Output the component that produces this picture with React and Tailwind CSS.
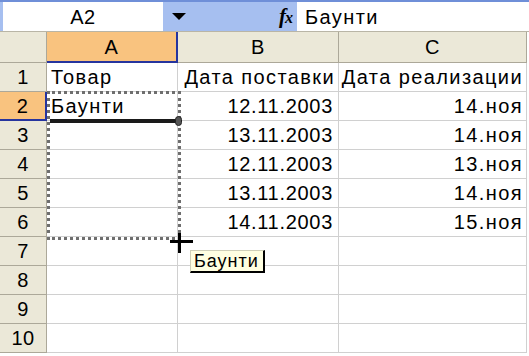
import React from "react";

const rows = [
  ["Товар", "Дата поставки", "Дата реализации"],
  ["Баунти", "12.11.2003", "14.ноя"],
  ["", "13.11.2003", "14.ноя"],
  ["", "12.11.2003", "13.ноя"],
  ["", "13.11.2003", "14.ноя"],
  ["", "14.11.2003", "15.ноя"],
  ["", "", ""],
  ["", "", ""],
  ["", "", ""],
  ["", "", ""],
];

function App() {
  return (
    <div className="relative w-[529px] h-[356px] overflow-hidden bg-white font-['Liberation_Sans',Arial,sans-serif] text-[20px] tracking-[0.5px] text-black">
      {/* formula bar */}
      <div className="flex h-[32px] border-t-[2px] border-[#6f8fd8] bg-[#a6bff0] border-b border-b-[#b9b5a6]">
        <div className="ml-[3px] w-[160px] bg-white flex items-center justify-center">A2</div>
        <div className="w-[134px] flex items-center pl-[9px]">
          <svg width="14" height="7" viewBox="0 0 14 7">
            <path d="M0 0h14L7 7z" fill="#000" />
          </svg>
          <span className="ml-auto mr-[5px] font-['Liberation_Serif',serif] italic font-bold text-[21px] tracking-[-1px]">
            f<span className="text-[16px]">x</span>
          </span>
        </div>
        <div className="flex-1 bg-white flex items-center pl-[8px] tracking-[1.4px]">Баунти</div>
      </div>

      {/* grid */}
      <div className="grid grid-cols-[47px_131px_161px_188px] grid-rows-[31px_repeat(10,29px)]">
        <div className="bg-[#ebe8d8] border-r border-b border-[#aca899]" />
        <div className="bg-[#f9c37f] border-r-[2px] border-b-[2px] border-[#26349e] flex items-center justify-center">A</div>
        <div className="bg-[#ebe8d8] border-r border-b border-[#aca899] flex items-center justify-center">B</div>
        <div className="bg-[#ebe8d8] border-r border-b border-[#aca899] flex items-center justify-center">C</div>
        {rows.map((r, i) => (
          <React.Fragment key={i}>
            <div
              className={
                i === 1
                  ? "bg-[#f9c37f] border-r-[2px] border-b-[2px] border-[#26349e] flex items-center justify-center"
                  : "bg-[#ebe8d8] border-r border-b border-[#aca899] flex items-center justify-center"
              }
            >
              {i + 1}
            </div>
            <div className="border-r border-b border-[#d0d0d0] flex items-center pl-[4px] whitespace-nowrap tracking-[1.4px]">{r[0]}</div>
            <div
              className={
                i === 0
                  ? "border-r border-b border-[#d0d0d0] flex items-center justify-end pr-[3px] whitespace-nowrap tracking-[1.4px]"
                  : "border-r border-b border-[#d0d0d0] flex items-center justify-end pr-[5px] whitespace-nowrap tracking-[0.7px]"
              }
            >
              {r[1]}
            </div>
            <div className="border-r border-b border-[#d0d0d0] flex items-center justify-end pr-[3px] whitespace-nowrap tracking-[1.4px]">{r[2]}</div>
          </React.Fragment>
        ))}
      </div>

      {/* copy marquee around A2:A6 */}
      <div className="absolute left-[47px] top-[91px] w-[134px] h-[149px] border-[3px] border-dotted border-[#6e6e6e]" />
      {/* drag outline */}
      <div className="absolute left-[50px] top-[119px] w-[126px] h-[4px] bg-[#1a1a1a]" />
      <div className="absolute left-[175px] top-[116px] w-[7px] h-[10px] rounded-full bg-[#555] border border-[#222]" />

      {/* cursor */}
      <div className="absolute left-[170px] top-[240px] w-[23px] h-[3px] bg-black" />
      <div className="absolute left-[178px] top-[233px] w-[3px] h-[20px] bg-black" />

      {/* tooltip */}
      <div className="absolute left-[190px] top-[250px] h-[23px] pl-[3px] pr-[4px] bg-[#ffffe1] border-l border-t border-[#cfcfb8] border-r-[2px] border-b-[2px] border-r-black border-b-black flex items-center text-[18px] tracking-[1px]">
        Баунти
      </div>
    </div>
  );
}

export default App;
